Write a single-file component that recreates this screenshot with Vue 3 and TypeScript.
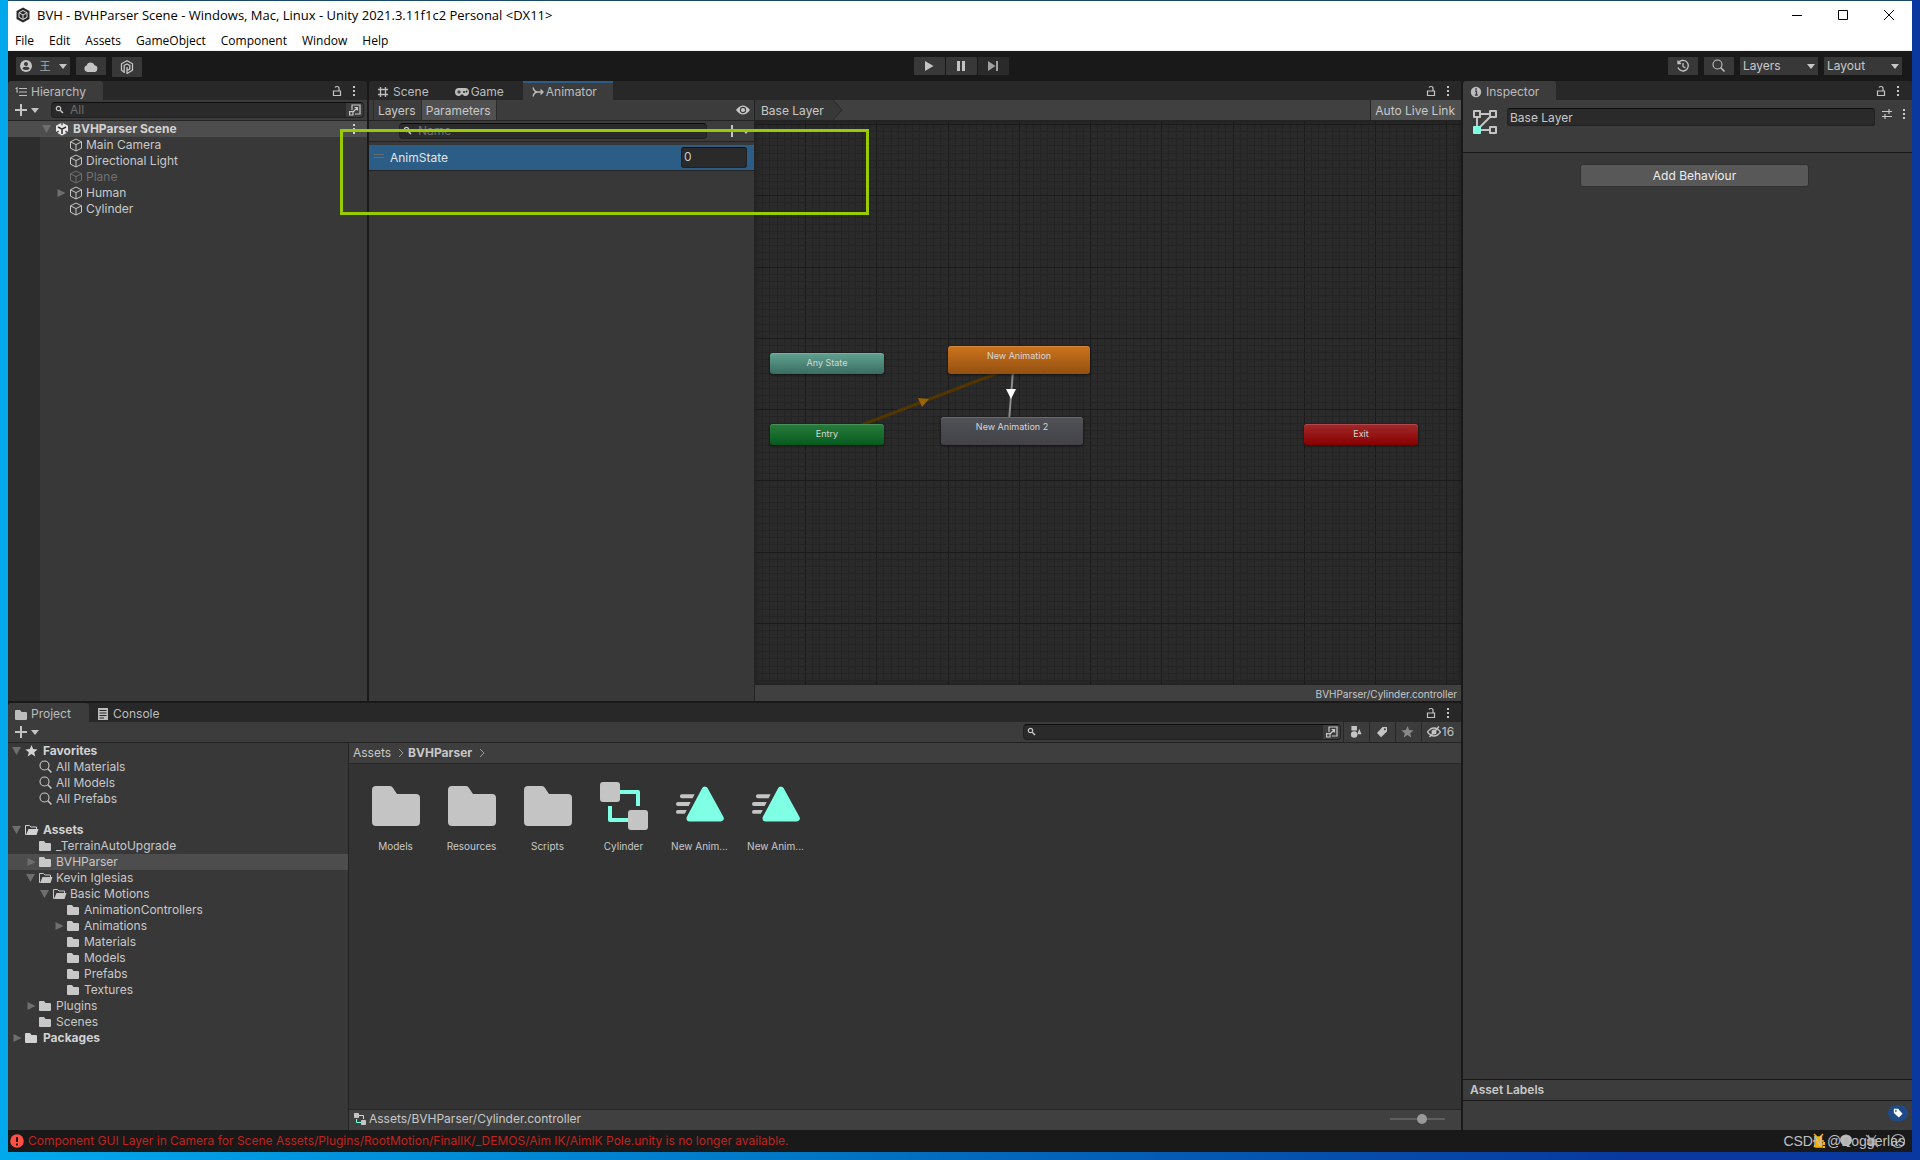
<script setup lang="ts">
import { ref } from 'vue'

interface Row {
  label: string
  depth: number
  icon: string
  caret?: 'open' | 'closed'
  bold?: boolean
  selected?: boolean
  dim?: boolean
  spaced?: boolean
}

const menus = ['File', 'Edit', 'Assets', 'GameObject', 'Component', 'Window', 'Help']

const hierarchy: Row[] = [
  { label: 'BVHParser Scene', depth: 0, icon: 'unity', caret: 'open', bold: true, selected: true },
  { label: 'Main Camera', depth: 1, icon: 'cube' },
  { label: 'Directional Light', depth: 1, icon: 'cube' },
  { label: 'Plane', depth: 1, icon: 'cube', dim: true },
  { label: 'Human', depth: 1, icon: 'cube', caret: 'closed' },
  { label: 'Cylinder', depth: 1, icon: 'cube' },
]

const project: Row[] = [
  { label: 'Favorites', depth: 0, icon: 'star', caret: 'open', bold: true },
  { label: 'All Materials', depth: 1, icon: 'search' },
  { label: 'All Models', depth: 1, icon: 'search' },
  { label: 'All Prefabs', depth: 1, icon: 'search' },
  { label: 'Assets', depth: 0, icon: 'folder-open', caret: 'open', bold: true, spaced: true },
  { label: '_TerrainAutoUpgrade', depth: 1, icon: 'folder' },
  { label: 'BVHParser', depth: 1, icon: 'folder', caret: 'closed', selected: true },
  { label: 'Kevin Iglesias', depth: 1, icon: 'folder-open', caret: 'open' },
  { label: 'Basic Motions', depth: 2, icon: 'folder-open', caret: 'open' },
  { label: 'AnimationControllers', depth: 3, icon: 'folder' },
  { label: 'Animations', depth: 3, icon: 'folder', caret: 'closed' },
  { label: 'Materials', depth: 3, icon: 'folder' },
  { label: 'Models', depth: 3, icon: 'folder' },
  { label: 'Prefabs', depth: 3, icon: 'folder' },
  { label: 'Textures', depth: 3, icon: 'folder' },
  { label: 'Plugins', depth: 1, icon: 'folder', caret: 'closed' },
  { label: 'Scenes', depth: 1, icon: 'folder' },
  { label: 'Packages', depth: 0, icon: 'folder', caret: 'closed', bold: true },
]

const assets = [
  { label: 'Models', icon: 'big-folder' },
  { label: 'Resources', icon: 'big-folder' },
  { label: 'Scripts', icon: 'big-folder' },
  { label: 'Cylinder', icon: 'big-controller' },
  { label: 'New Anim...', icon: 'big-anim' },
  { label: 'New Anim...', icon: 'big-anim' },
]

const nodes = [
  { label: 'Any State', kind: 'any', x: 15, y: 232, w: 114, h: 21 },
  { label: 'Entry', kind: 'entry', x: 15, y: 303, w: 114, h: 21 },
  { label: 'New Animation', kind: 'default', x: 193, y: 225, w: 142, h: 28 },
  { label: 'New Animation 2', kind: 'state', x: 186, y: 296, w: 142, h: 28 },
  { label: 'Exit', kind: 'exit', x: 549, y: 303, w: 114, h: 21 },
]

// Canvas grid: ten minor cells per major cell, snapped to whole pixels.
const gridStep = 7.125
const gridLines = (origin: number) =>
  Array.from({ length: 400 }, (_, i) => ({
    at: Math.round(origin + (i - 10) * gridStep),
    major: i % 10 === 0,
  }))
const columns = gridLines(50)
const rowsOfGrid = gridLines(3)

const paramName = ref('')
const paramValue = ref('0')
const layerName = ref('Base Layer')
const hierarchyQuery = ref('')
const projectQuery = ref('')
const zoom = ref(60)
</script>

<template>
  <svg class="defs" aria-hidden="true">
    <symbol id="unity" viewBox="0 0 14 14">
      <path d="M7 0.5 13 3.8V10.2L7 13.5 1 10.2V3.8Z" fill="#e8e8e8" />
      <path d="M7 7.2V12M7 7.2 3 5M7 7.2 11 5" stroke="#333" stroke-width="1.5" fill="none" />
      <path d="M7 0v3.2M1 10.8l2.6-1.6M13 10.8l-2.6-1.6" stroke="#444" stroke-width="1.4" fill="none" />
    </symbol>
    <symbol id="cube" viewBox="0 0 14 14">
      <path d="M7 1 12.5 3.8V10.2L7 13 1.5 10.2V3.8ZM1.5 3.8 7 6.6 12.5 3.8M7 6.6V13" fill="none" stroke="currentColor" stroke-width="1" stroke-linejoin="round" />
    </symbol>
    <symbol id="star" viewBox="0 0 14 14">
      <path d="M6.5 1 8.2 5.1 12.6 5.4 9.2 8.2 10.3 12.5 6.5 10.1 2.7 12.5 3.8 8.2 0.4 5.4 4.8 5.1Z" fill="currentColor" />
    </symbol>
    <symbol id="search" viewBox="0 0 14 14">
      <circle cx="5.5" cy="5.5" r="4.5" fill="none" stroke="currentColor" stroke-width="1.1" />
      <path d="M8.8 8.8 12.5 12.5" stroke="currentColor" stroke-width="1.5" />
    </symbol>
    <symbol id="mini-search" viewBox="0 0 10 10">
      <circle cx="3.5" cy="3.5" r="2.2" fill="none" stroke="currentColor" stroke-width="1.2" />
      <path d="M5.2 5.2 8 8" stroke="currentColor" stroke-width="1.5" />
    </symbol>
    <symbol id="folder" viewBox="0 0 14 14">
      <path d="M0 3Q0 2 1 2H5L6.500 4H11Q12 4 12 5V11Q12 12 11 12H1Q0 12 0 11Z" fill="currentColor" />
    </symbol>
    <symbol id="folder-open" viewBox="0 0 14 14">
      <path d="M1.2 11.5H0.5V2.5H4.500L6 4H11.5V6" fill="none" stroke="currentColor" stroke-width="1" />
      <path d="M3.5 6H13.5L11.5 12H1Z" fill="currentColor" />
    </symbol>
    <symbol id="caret-down" viewBox="0 0 8 5"><path d="M0 0H8L4 5Z" fill="currentColor" /></symbol>
    <symbol id="plus" viewBox="0 0 12 12"><path d="M6 0V12M0 6H12" stroke="currentColor" stroke-width="2" /></symbol>
    <symbol id="lock" viewBox="0 0 10 12">
      <path d="M1.500 6H8.500V10.500H1.500ZM7 6V3.500Q7 1.500 5 1.500 3.500 1.500 3 2.500" fill="none" stroke="currentColor" stroke-width="1.2" />
    </symbol>
    <symbol id="dots" viewBox="0 0 4 12">
      <path d="M1 1h2v2H1ZM1 5h2v2H1ZM1 9h2v2H1Z" fill="currentColor" />
    </symbol>
    <symbol id="popout" viewBox="0 0 12 12">
      <path d="M3 6V1H11V10H6" fill="none" stroke="currentColor" stroke-width="1.2" />
      <path d="M0.6 7.6H4V11H0.6ZM4.5 7.5 8.5 3.5M5.5 3.5H8.5V6.5" fill="none" stroke="currentColor" stroke-width="1.2" />
    </symbol>
    <symbol id="list" viewBox="0 0 12 12">
      <path d="M0.500 2.500H2.500M4 2.500H12M4 6H12M4 9.500H12M2 1V6.500M2 6H3" stroke="currentColor" stroke-width="1.100" fill="none" />
    </symbol>
    <symbol id="hash" viewBox="0 0 12 12">
      <path d="M3.500 1V11M8.500 1V11M1 3.500H11M1 8.500H11" stroke="currentColor" stroke-width="1.3" />
    </symbol>
    <symbol id="gamepad" viewBox="0 0 14 10">
      <path d="M4 1H10A4 4 0 0 1 10 9Q8.500 9 8 7.500H6Q5.500 9 4 9A4 4 0 0 1 4 1Z" fill="currentColor" />
      <path d="M2.2 5H5.8M4 3.2V6.8" stroke="#282828" stroke-width="1.1" />
      <circle cx="9" cy="5" r="1" fill="#282828" /><circle cx="11.5" cy="4.5" r="1" fill="#282828" />
    </symbol>
    <symbol id="animator" viewBox="0 0 12 12">
      <path d="M1 1.500Q2 5.500 5 6Q2 6.500 1 10.500M4 6H11M8.500 3.500 11 6 8.500 8.500" fill="none" stroke="currentColor" stroke-width="1.3" />
    </symbol>
    <symbol id="info" viewBox="0 0 12 12">
      <circle cx="6" cy="6" r="5.2" fill="currentColor" />
      <path d="M5 5.200H6.500V9M4.800 9H7.800M5.200 3H6.800" stroke="#3c3c3c" stroke-width="1.3" fill="none" />
    </symbol>
    <symbol id="console" viewBox="0 0 12 12">
      <path d="M1 0H11V12H1Z" fill="currentColor" />
      <path d="M2.500 2.500H9.500M2.500 5H9.500M2.500 7.500H9.500M2.500 10H7" stroke="#282828" stroke-width="1" />
    </symbol>
    <symbol id="eye" viewBox="0 0 14 10">
      <path d="M0 5Q3.500 0.500 7 0.500T14 5Q10.500 9.500 7 9.500T0 5Z" fill="currentColor" />
      <circle cx="7" cy="5" r="2.6" fill="none" stroke="#3c3c3c" stroke-width="1.1" />
    </symbol>
    <symbol id="eye-off" viewBox="0 0 14 12">
      <path d="M0.500 6Q3.500 2 7 2T13.500 6Q10.500 10 7 10T0.500 6Z" fill="none" stroke="currentColor" stroke-width="1.3" />
      <circle cx="7" cy="6" r="2.5" fill="currentColor" />
      <path d="M2.500 11 12 0.500" stroke="currentColor" stroke-width="1.4" />
    </symbol>
    <symbol id="shapes" viewBox="0 0 12 13">
      <path d="M1 0H7V5H1ZM7.500 9 9.500 3 12 9Z" fill="currentColor" /><circle cx="4" cy="9.3" r="3.5" fill="currentColor" />
    </symbol>
    <symbol id="tag" viewBox="0 0 12 12">
      <path d="M6.500 1H11V5.500L5 11.200 1 7Z" fill="currentColor" /><circle cx="8.8" cy="3.2" r="1" fill="#3c3c3c" />
    </symbol>
    <symbol id="big-folder" viewBox="0 0 48 48">
      <path d="M0 8Q0 4 4 4H18Q20 4 21 6L25 12H44Q48 12 48 16V40Q48 44 44 44H4Q0 44 0 40Z" fill="#c4c4c4" />
    </symbol>
    <symbol id="big-controller" viewBox="0 0 48 48">
      <path d="M20 10H38V24M10 24V38H28" fill="none" stroke="#7fffe4" stroke-width="4" stroke-linejoin="round" />
      <rect width="20" height="20" rx="3" fill="#c4c4c4" /><rect x="28" y="28" width="20" height="20" rx="3" fill="#c4c4c4" />
    </symbol>
    <symbol id="big-anim" viewBox="0 0 49 48">
      <path d="M29.500 7.500 45.500 36.500H14Z" fill="#7fffe4" stroke="#7fffe4" stroke-width="6.5" stroke-linejoin="round" />
      <path d="M6 12H19L17 16H6Q4 16 4 14T6 12ZM2 20H15L13 24H2Q0 24 0 22T2 20ZM2 28H11L9 32H2Q0 32 0 30T2 28Z" fill="#c4c4c4" />
    </symbol>
  </svg>

  <div class="desktop">
    <div class="window">
      <header class="title-bar">
        <svg class="app-icon" viewBox="0 0 14 16">
          <path d="M7 0.500 13.500 4V12L7 15.500 0.500 12V4Z" fill="#2b2b2b" />
          <path d="M7 3.500 11 5.700V10.300L7 12.500 3 10.300V5.700ZM7 8V12M7 8 3.500 6M7 8 10.500 6" fill="none" stroke="#ddd" stroke-width="1" />
        </svg>
        <h1>BVH - BVHParser Scene - Windows, Mac, Linux - Unity 2021.3.11f1c2 Personal &lt;DX11&gt;</h1>
        <div class="window-buttons">
          <button aria-label="Minimize"><svg viewBox="0 0 10 10"><path d="M0 5.500H10" /></svg></button>
          <button aria-label="Maximize"><svg viewBox="0 0 10 10"><path d="M0.500 0.500H9.500V9.500H0.500Z" /></svg></button>
          <button aria-label="Close"><svg viewBox="0 0 10 10"><path d="M0 0 10 10M10 0 0 10" /></svg></button>
        </div>
      </header>
      <nav class="menu-bar">
        <button v-for="m in menus" :key="m">{{ m }}</button>
      </nav>

      <div class="toolbar">
        <div class="tool-side">
          <button class="tool account">
            <svg class="i12" viewBox="0 0 12 12">
              <circle cx="6" cy="6" r="6" fill="currentColor" /><circle cx="6" cy="4" r="2" fill="#383838" /><path d="M2.500 9Q2.500 6.800 6 6.800T9.500 9Q6 11 2.500 9Z" fill="#383838" />
            </svg>
            <span>王</span>
            <svg class="caret"><use href="#caret-down" /></svg>
          </button>
          <button class="tool w30" aria-label="Cloud">
            <svg class="cloud" viewBox="0 0 14 11"><path d="M3.500 11A3.300 3.300 0 0 1 2.600 4.600 4.200 4.200 0 0 1 10.600 4.300 3.400 3.400 0 0 1 10.500 11Z" fill="currentColor" /></svg>
          </button>
          <button class="tool w30 plastic" aria-label="Version control">
            <svg class="i14" viewBox="0 0 14 14"><path d="M4 12 1.500 10.200V3.800L7 0.800 12.500 3.800V10.200L7 13.500V10.500L9.800 9V5.500L7 4 4.200 5.500V13M7 10V7" fill="none" stroke="currentColor" stroke-width="1.3" /></svg>
          </button>
        </div>
        <div class="play">
          <button class="tool" aria-label="Play"><svg class="i12" viewBox="0 0 12 12"><path d="M2 1 10.500 6 2 11Z" fill="currentColor" /></svg></button>
          <button class="tool" aria-label="Pause"><svg class="i12" viewBox="0 0 12 12"><path d="M2 1H5V11H2ZM7 1H10V11H7Z" fill="currentColor" /></svg></button>
          <button class="tool step" aria-label="Step"><svg class="i12" viewBox="0 0 12 12"><path d="M1 1 8.500 6 1 11ZM9 1H11V11H9Z" fill="currentColor" /></svg></button>
        </div>
        <div class="tool-side right">
          <button class="tool w30" aria-label="History">
            <svg class="i14" viewBox="0 0 14 14"><path d="M2.500 3.800A5.300 5.300 0 1 1 2 8.500M2 1.500V4.500H5M7 4V7.500L9.500 9" fill="none" stroke="currentColor" stroke-width="1.3" /></svg>
          </button>
          <button class="tool w30" aria-label="Search"><svg class="i14"><use href="#search" /></svg></button>
          <label class="picker"><select aria-label="Layers"><option>Layers</option></select><svg class="caret"><use href="#caret-down" /></svg></label>
          <label class="picker"><select aria-label="Layout"><option>Layout</option></select><svg class="caret"><use href="#caret-down" /></svg></label>
        </div>
      </div>

      <main class="docks">
        <div class="left">
          <div class="upper">
            <section class="panel hierarchy">
              <div class="tabs">
                <button class="tab on t-hierarchy"><svg class="i12"><use href="#list" /></svg>Hierarchy</button>
                <span class="tab-tools"><svg class="lock"><use href="#lock" /></svg><svg class="dots"><use href="#dots" /></svg></span>
              </div>
              <div class="bar search-bar">
                <button class="add" aria-label="Create"><svg class="i12"><use href="#plus" /></svg><svg class="caret"><use href="#caret-down" /></svg></button>
                <div class="field">
                  <svg class="i10"><use href="#mini-search" /></svg>
                  <input v-model="hierarchyQuery" placeholder="All" aria-label="Search hierarchy" />
                  <button class="pop" aria-label="Open search"><svg class="i12"><use href="#popout" /></svg></button>
                </div>
              </div>
              <ul class="tree scene-tree">
                <li v-for="r in hierarchy" :key="r.label" :class="{ bold: r.bold, selected: r.selected, dim: r.dim }">
                  <span class="indent" :style="{ width: r.depth * 14 + 'px' }"></span>
                  <span class="arrow" :class="r.caret"></span>
                  <svg class="i14"><use :href="'#' + r.icon" /></svg>
                  <span class="label">{{ r.label }}</span>
                  <svg v-if="r.bold" class="dots"><use href="#dots" /></svg>
                </li>
              </ul>
            </section>

            <section class="panel animator">
              <div class="tabs">
                <button class="tab t-scene"><svg class="i12"><use href="#hash" /></svg>Scene</button>
                <button class="tab t-game"><svg class="eye"><use href="#gamepad" /></svg>Game</button>
                <button class="tab on focus"><svg class="i12"><use href="#animator" /></svg>Animator</button>
                <span class="tab-tools"><svg class="lock"><use href="#lock" /></svg><svg class="dots"><use href="#dots" /></svg></span>
              </div>
              <div class="anim-body">
                <div class="params">
                  <div class="bar param-tabs">
                    <button>Layers</button>
                    <button class="on">Parameters</button>
                    <svg class="eye"><use href="#eye" /></svg>
                  </div>
                  <div class="bar param-search">
                    <div class="field">
                      <svg class="i10"><use href="#mini-search" /></svg>
                      <input v-model="paramName" placeholder="Name" aria-label="Search parameters" />
                    </div>
                    <button class="add" aria-label="Add parameter"><svg class="i12"><use href="#plus" /></svg><svg class="caret"><use href="#caret-down" /></svg></button>
                  </div>
                  <div class="param">
                    <span class="grip"></span>
                    <label for="anim-state">AnimState</label>
                    <input id="anim-state" v-model="paramValue" />
                  </div>
                </div>
                <div class="graph">
                  <div class="bar crumbs-bar">
                    <button class="crumb">Base Layer</button>
                    <svg class="chev" viewBox="0 0 11 20"><path d="M0 0H1L10 10 1 20H0Z" fill="#383838" /><path d="M1 0 10 10 1 20" fill="none" stroke="#282828" /></svg>
                    <button class="live">Auto Live Link</button>
                  </div>
                  <div class="canvas">
                    <svg class="grid" aria-hidden="true">
                      <g shape-rendering="crispEdges">
                        <rect v-for="(l, i) in columns" :key="'c' + i" :x="l.at" y="0" width="1" height="100%" :fill="l.major ? '#1b1b1b' : '#242424'" />
                        <rect v-for="(l, i) in rowsOfGrid" :key="'r' + i" x="0" :y="l.at" width="100%" height="1" :fill="l.major ? '#1b1b1b' : '#242424'" />
                      </g>
                      <path d="M83 313 264 244" stroke="#523600" stroke-width="3" />
                      <path d="M163 277 174 278 167 286Z" fill="#996300" />
                      <path d="M258 250 254 300" stroke="#8c8c8c" stroke-width="2" />
                      <path d="M251 268H261L256 278Z" fill="#fff" />
                    </svg>
                    <div v-for="n in nodes" :key="n.label" class="node" :class="n.kind" :style="{ left: n.x + 'px', top: n.y + 'px', width: n.w + 'px', height: n.h + 'px' }">{{ n.label }}</div>
                  </div>
                  <div class="graph-foot">BVHParser/Cylinder.controller</div>
                </div>
              </div>
            </section>
          </div>

          <section class="panel project">
            <div class="tabs">
              <button class="tab on t-project"><svg class="i12" viewBox="0 0 12 12"><use href="#folder" width="14" height="14" /></svg>Project</button>
              <button class="tab"><svg class="i12"><use href="#console" /></svg>Console</button>
              <span class="tab-tools"><svg class="lock"><use href="#lock" /></svg><svg class="dots"><use href="#dots" /></svg></span>
            </div>
            <div class="bar project-bar">
              <button class="add" aria-label="Create"><svg class="i12"><use href="#plus" /></svg><svg class="caret"><use href="#caret-down" /></svg></button>
              <div class="field">
                <svg class="i10"><use href="#mini-search" /></svg>
                <input v-model="projectQuery" aria-label="Search project" />
                <button class="pop" aria-label="Open search"><svg class="i12"><use href="#popout" /></svg></button>
              </div>
              <div class="filters">
                <button aria-label="Filter by type"><svg class="i12"><use href="#shapes" /></svg></button>
                <button aria-label="Filter by label"><svg class="i12"><use href="#tag" /></svg></button>
                <button class="fav" aria-label="Save search"><svg class="i14"><use href="#star" /></svg></button>
                <button class="hidden-count"><svg class="eye"><use href="#eye-off" /></svg>16</button>
              </div>
            </div>
            <div class="project-body">
              <ul class="tree project-tree">
                <li v-for="(r, i) in project" :key="i" :class="{ bold: r.bold, selected: r.selected, spaced: r.spaced }">
                  <span class="indent" :style="{ width: r.depth * 14 + 'px' }"></span>
                  <span class="arrow" :class="r.caret"></span>
                  <svg class="i14"><use :href="'#' + r.icon" /></svg>
                  <span class="label">{{ r.label }}</span>
                </li>
              </ul>
              <div class="browser">
                <nav class="path">
                  <a href="#">Assets</a>
                  <svg viewBox="0 0 6 10"><path d="M1 1 5 5 1 9" /></svg>
                  <a href="#" class="bold">BVHParser</a>
                  <svg viewBox="0 0 6 10"><path d="M1 1 5 5 1 9" /></svg>
                </nav>
                <div class="assets">
                  <figure v-for="(a, i) in assets" :key="i">
                    <svg><use :href="'#' + a.icon" /></svg>
                    <figcaption>{{ a.label }}</figcaption>
                  </figure>
                </div>
                <div class="browser-foot">
                  <svg class="i12"><use href="#big-controller" /></svg>
                  <span>Assets/BVHParser/Cylinder.controller</span>
                  <input v-model="zoom" type="range" aria-label="Icon size" />
                </div>
              </div>
            </div>
          </section>
        </div>

        <section class="panel inspector">
          <div class="tabs">
            <button class="tab on t-inspector"><svg class="i12"><use href="#info" /></svg>Inspector</button>
            <span class="tab-tools"><svg class="lock"><use href="#lock" /></svg><svg class="dots"><use href="#dots" /></svg></span>
          </div>
          <div class="inspector-head">
            <svg class="layer-icon" viewBox="0 0 24 24">
              <path d="M4 4H20M4 4V20H20M4 20 20 4" fill="none" stroke="#c4c4c4" stroke-width="2" />
              <path d="M1 1H7V7H1ZM17 1H23V7H17ZM17 17H23V23H17Z" fill="#3c3c3c" stroke="#c4c4c4" stroke-width="2" stroke-linejoin="round" />
              <rect y="16" width="8" height="8" rx="1" fill="#7fffe4" />
            </svg>
            <input v-model="layerName" aria-label="Layer name" />
            <svg class="i12 preset" viewBox="0 0 12 12"><path d="M1 3.500H11M1 8.500H11M8 1V6M4 6V11" fill="none" stroke="currentColor" stroke-width="1.2" /></svg>
            <svg class="dots"><use href="#dots" /></svg>
          </div>
          <div class="inspector-body"><button>Add Behaviour</button></div>
          <h2>Asset Labels</h2>
          <div class="labels">
            <button aria-label="Add label"><svg viewBox="0 0 12 12"><path d="M1 1H6L11.500 7 7 11.500 1 6Z" fill="#fff" /><circle cx="3.5" cy="3.5" r="1" fill="#204a87" /></svg></button>
          </div>
        </section>
      </main>

      <footer class="status">
        <svg class="i14" viewBox="0 0 14 14"><circle cx="7" cy="7" r="6.8" fill="#ff5046" /><path d="M7 3V8M7 9.500V11.500" stroke="#191919" stroke-width="2" /></svg>
        <span>Component GUI Layer in Camera for Scene Assets/Plugins/RootMotion/FinalIK/_DEMOS/Aim IK/AimIK Pole.unity is no longer available.</span>
        <div class="status-icons">
          <svg viewBox="0 0 16 16"><path d="M4 4H9L10 14H4ZM2 1 5 4M11 1 8 4M1 8H12M2 14 5 10M10 10V12" fill="#f7b500" stroke="#f7b500" stroke-width="1.5" /><path d="M12 9V12M12 13V15" stroke="#f7b500" stroke-width="2" /></svg>
          <svg viewBox="0 0 16 16"><ellipse cx="8" cy="7" rx="6" ry="5.5" fill="#b4b4b4" /><path d="M8 10 13 14H9Z" fill="#b4b4b4" /></svg>
          <svg viewBox="0 0 16 16"><ellipse cx="8" cy="9" rx="3.5" ry="4.5" fill="#8a8a8a" /><path d="M2 2 14 14M3 7H13M3 11H13M4 2 6 5M12 2 10 5" fill="none" stroke="#9a9a9a" stroke-width="1.3" /></svg>
          <svg viewBox="0 0 16 16"><circle cx="8" cy="8" r="6.5" fill="none" stroke="#b4b4b4" stroke-width="1.2" /><path d="M5 8 7 10 11 6" fill="none" stroke="#b4b4b4" stroke-width="1.2" /></svg>
          <span class="watermark">CSDN @Doggerlas</span>
        </div>
      </footer>
      <div class="highlight"></div>
    </div>
  </div>
</template>

<style>
html,
body {
  margin: 0;
  background: #00a4ea;
}
</style>

<style scoped>
* {
  box-sizing: border-box;
}
.defs {
  position: absolute;
  width: 0;
  height: 0;
}
button,
input,
select {
  font: inherit;
  color: inherit;
  border: 0;
  padding: 0;
  margin: 0;
  background: none;
  outline: 0;
}
svg {
  flex: none;
  display: block;
}
.desktop {
  height: 100vh;
  min-height: 720px;
  padding: 0 8px 8px;
  background: linear-gradient(90deg, #00a8ec 0%, #0078c8 40%, #0838a0 85%, #0838a0 100%);
  font: 12px/16px Inter, "Noto Sans CJK SC", sans-serif;
  color: #c8c8c8;
}
.window {
  position: relative;
  height: 100%;
  display: flex;
  flex-direction: column;
  background: #191919;
  border-top: 1px solid #1a4a70;
}
.title-bar {
  display: flex;
  align-items: center;
  height: 28px;
  padding-left: 8px;
  background: #fff;
  color: #000;
  font-family: "Open Sans", sans-serif;
}
.app-icon {
  width: 14px;
  height: 16px;
}
h1 {
  flex: 1;
  margin: 0 0 0 7px;
  font-size: 13px;
  font-weight: 400;
  white-space: nowrap;
}
.window-buttons {
  display: flex;
}
.window-buttons button {
  width: 46px;
  height: 28px;
  display: grid;
  place-items: center;
}
.window-buttons svg {
  width: 10px;
  height: 10px;
  stroke: #000;
  fill: none;
}
.menu-bar {
  display: flex;
  gap: 15px;
  height: 22px;
  padding: 2px 0 0 7px;
  background: #fff;
  border-bottom: 1px solid #f0f0f0;
  color: #000;
  font-family: "Open Sans", sans-serif;
}
.toolbar {
  display: grid;
  grid-template-columns: 1fr auto 1fr;
  align-items: start;
  height: 30px;
  padding: 6px 10px 0 8px;
}
.tool-side {
  display: flex;
  gap: 6px;
}
.right {
  justify-content: flex-end;
}
.tool {
  display: flex;
  align-items: center;
  justify-content: center;
  height: 18px;
  background: #383838;
  border-radius: 1px;
  color: #c4c4c4;
}
.account {
  width: 54px;
  gap: 8px;
}
.account span {
  font-size: 11px;
  color: #a8a8a8;
}
.w30 {
  width: 30px;
}
.plastic {
  height: 20px;
}
.cloud {
  width: 14px;
  height: 11px;
}
.play {
  display: flex;
  gap: 1px;
  margin-left: 4px;
}
.play .tool {
  width: 31px;
}
.play .step {
  background: #2a2a2a;
  color: #a0a0a0;
}
.picker {
  display: flex;
  align-items: center;
  width: 78px;
  height: 18px;
  padding: 0 3px;
  background: #383838;
}
.picker select {
  flex: 1;
  min-width: 0;
  appearance: none;
}
.i10 {
  width: 10px;
  height: 10px;
}
.i12 {
  width: 12px;
  height: 12px;
}
.i14 {
  width: 14px;
  height: 14px;
}
.caret {
  width: 8px;
  height: 5px;
}
.eye {
  width: 14px;
  height: 12px;
}
.lock {
  width: 10px;
  height: 12px;
}
.dots {
  width: 4px;
  height: 12px;
}
.docks {
  flex: 1;
  min-height: 0;
  display: flex;
  gap: 2px;
}
.left {
  flex: 1;
  min-width: 0;
  display: flex;
  flex-direction: column;
  gap: 2px;
}
.upper {
  flex: 620 1 0;
  min-height: 0;
  display: flex;
  gap: 2px;
}
.panel {
  display: flex;
  flex-direction: column;
  min-width: 0;
  min-height: 0;
  background: #383838;
  border-radius: 3px 3px 0 0;
  overflow: hidden;
}
.hierarchy {
  width: 359px;
}
.animator {
  flex: 1;
}
.project {
  flex: 427 1 0;
}
.inspector {
  width: 449px;
}
.tabs {
  display: flex;
  flex: none;
  height: 19px;
  background: #282828;
}
.tab {
  display: flex;
  align-items: center;
  gap: 4px;
  padding: 2px 20px 0 8px;
  color: #bdbdbd;
}
.tab.on {
  padding-left: 7px;
  background: #3c3c3c;
  border-radius: 3px 3px 0 0;
}
.tab.focus {
  width: 90px;
  gap: 2px;
  padding: 0 0 0 9px;
  border-top: 2px solid #2c5d87;
  border-radius: 0;
}
.t-scene {
  padding-right: 18px;
}
.t-game {
  gap: 2px;
  padding-right: 19px;
}
.t-hierarchy {
  width: 95px;
}
.t-project {
  width: 81px;
}
.t-inspector {
  width: 93px;
}
.tab-tools {
  display: flex;
  align-items: center;
  gap: 10px;
  margin-left: auto;
  padding-right: 11px;
  color: #c4c4c4;
}
.inspector .tab-tools {
  padding-right: 12px;
}
.bar {
  display: flex;
  align-items: center;
  flex: none;
  height: 21px;
  background: #3c3c3c;
  border-bottom: 1px solid #232323;
}
.add {
  display: flex;
  align-items: center;
  gap: 4px;
  color: #c4c4c4;
}
.search-bar {
  padding: 0 3px 0 7px;
  gap: 12px;
}
.field {
  flex: 1;
  display: flex;
  align-items: center;
  height: 16px;
  padding-left: 3px;
  gap: 5px;
  background: #2a2a2a;
  border: 1px solid #212121;
  border-top-color: #0d0d0d;
  border-radius: 4px;
  overflow: hidden;
}
.field input {
  flex: 1;
  min-width: 0;
  height: 14px;
}
::placeholder {
  color: #6e6e6e;
  opacity: 1;
}
.pop {
  display: grid;
  place-items: center;
  width: 17px;
  height: 16px;
  background: #3c3c3c;
}
.tree {
  list-style: none;
  margin: 0;
  padding: 0;
}
.tree li {
  display: flex;
  align-items: center;
  height: 16px;
  padding-left: 4px;
  white-space: nowrap;
}
.tree .label {
  flex: 1;
  margin-left: 3px;
}
.tree .bold {
  font-weight: 700;
  color: #d2d2d2;
}
.tree .bold .label {
  margin-left: 4px;
}
.tree .dim {
  color: #707070;
}
.tree .selected {
  background: #4d4d4d;
}
.tree .spaced {
  margin-top: 15px;
}
.tree .dots {
  margin-right: 11px;
}
.indent {
  flex: none;
}
.arrow {
  flex: none;
  width: 10px;
  height: 8px;
  margin-right: 3px;
}
.arrow.open {
  background: #6e6e6e;
  clip-path: polygon(0 0, 90% 0, 45% 100%);
}
.arrow.closed {
  background: #6e6e6e;
  clip-path: polygon(15% 0, 95% 50%, 15% 100%);
}
.scene-tree {
  flex: 1;
  background: linear-gradient(90deg, #2d2d2d 32px, #383838 32px);
}
.scene-tree li {
  padding-left: 34px;
}
.anim-body {
  flex: 1;
  min-height: 0;
  display: flex;
}
.params {
  width: 386px;
  border-right: 1px solid #232323;
}
.param-tabs {
  padding: 0 4px;
}
.param-tabs button {
  height: 20px;
  padding: 1px 5px 0 4px;
  border-left: 1px solid #2b2b2b;
}
.param-tabs .on {
  background: #505050;
  border-right: 1px solid #2b2b2b;
}
.param-tabs .eye {
  margin-left: auto;
}
.param-search {
  padding: 0 4px 0 30px;
  gap: 19px;
}
.param {
  display: flex;
  align-items: center;
  height: 26px;
  margin-top: 3px;
  padding: 0 7px 0 5px;
  background: #2c5d87;
  border-bottom: 1px solid #232323;
  color: #e4e4e4;
}
.grip {
  width: 10px;
  height: 4px;
  margin: 0 6px 4px 0;
  border: solid #6a6a6a;
  border-width: 1px 0;
}
.param label {
  flex: 1;
}
.param input {
  width: 66px;
  height: 21px;
  padding: 0 2px 2px;
  background: #2a2a2a;
  border: 1px solid #212121;
  border-top-color: #0d0d0d;
  border-radius: 3px;
  color: #c8c8c8;
}
.graph {
  flex: 1;
  min-width: 0;
  display: flex;
  flex-direction: column;
}
.crumbs-bar {
  background: #404040;
}
.crumb {
  height: 20px;
  padding: 1px 8px 0 6px;
  background: #383838;
}
.chev {
  width: 11px;
  height: 20px;
}
.live {
  height: 20px;
  margin-left: auto;
  padding: 1px 6px 0 4px;
  background: #505050;
  border-left: 1px solid #232323;
}
.canvas {
  position: relative;
  flex: 1;
  min-height: 0;
  overflow: hidden;
  background: #2a2a2a;
  box-shadow: inset 0 0 6px #1c1c1c;
}
.grid {
  width: 100%;
  height: 100%;
}
.node {
  position: absolute;
  border-radius: 3px;
  font-size: 9px;
  line-height: 20px;
  text-align: center;
  color: #d6d6d6;
  box-shadow: inset 0 1px 0 rgba(255, 255, 255, 0.15), 0 1px 3px rgba(0, 0, 0, 0.6);
}
.any {
  background: linear-gradient(#61a391, #3a6c62);
}
.entry {
  background: linear-gradient(#2a7d3c, #055a1f);
}
.default {
  background: linear-gradient(#cb741e, #945010);
}
.state {
  background: linear-gradient(#505257, #434347);
}
.exit {
  background: linear-gradient(#a22a2c, #880000);
}
.graph-foot {
  height: 16px;
  padding: 1px 4px 0 0;
  background: #404040;
  text-align: right;
  font-size: 10px;
}
.project-bar {
  padding-left: 7px;
}
.project-bar .add {
  margin-right: auto;
}
.project-bar .field {
  flex: 0 0 318px;
  margin-right: 2px;
}
.filters {
  display: flex;
}
.filters button {
  display: flex;
  align-items: center;
  justify-content: center;
  width: 26px;
  height: 20px;
  padding-right: 2px;
  border-left: 1px solid #282828;
  color: #c4c4c4;
}
.filters .fav {
  color: #888;
}
.filters .hidden-count {
  width: 40px;
  gap: 1px;
}
.project-body {
  flex: 1;
  min-height: 0;
  display: flex;
}
.project-tree {
  width: 341px;
  border-right: 1px solid #232323;
}
.browser {
  flex: 1;
  min-width: 0;
  display: flex;
  flex-direction: column;
  background: #333;
}
.path {
  display: flex;
  align-items: center;
  height: 21px;
  padding-left: 4px;
  background: #3e3e3e;
  border-bottom: 1px solid #282828;
}
.path a {
  color: inherit;
  text-decoration: none;
}
.path .bold {
  font-weight: 700;
}
.path svg {
  width: 6px;
  height: 10px;
  margin: 0 4px 0 7px;
  fill: none;
  stroke: #9a9a9a;
}
.assets {
  flex: 1;
  display: flex;
  padding: 18px 0 0 9px;
}
figure {
  display: flex;
  flex-direction: column;
  align-items: center;
  width: 76px;
  margin: 0;
}
figure svg {
  width: 48px;
  height: 48px;
}
figcaption {
  margin-top: 8px;
  padding-right: 1px;
  font-size: 10px;
}
.browser-foot {
  display: flex;
  align-items: center;
  gap: 3px;
  height: 21px;
  padding: 0 16px 2px 5px;
  background: #404040;
  border-top: 1px solid #282828;
}
.browser-foot span {
  flex: 1;
}
input[type="range"] {
  appearance: none;
  width: 55px;
  height: 12px;
}
input[type="range"]::-webkit-slider-runnable-track {
  height: 2px;
  background: #5e5e5e;
}
input[type="range"]::-webkit-slider-thumb {
  appearance: none;
  width: 10px;
  height: 10px;
  margin-top: -4px;
  border-radius: 50%;
  background: #999;
}
.inspector-head {
  display: flex;
  align-items: flex-start;
  height: 53px;
  padding: 8px 6px 0 10px;
  background: #3c3c3c;
  border-bottom: 1px solid #1a1a1a;
}
.layer-icon {
  width: 24px;
  height: 24px;
  margin: 2px 10px 0 0;
}
.inspector-head input {
  flex: 1;
  min-width: 0;
  height: 18px;
  padding: 0 2px;
  background: #2a2a2a;
  border: 1px solid #212121;
  border-top-color: #0d0d0d;
  border-radius: 3px;
}
.preset {
  margin: 0 9px 0 6px;
}
.inspector-body {
  flex: 1;
  padding: 11px 0 0 14px;
  text-align: center;
}
.inspector-body button {
  width: 229px;
  height: 23px;
  background: #585858;
  border: 1px solid #303030;
  border-radius: 3px;
  color: #eee;
}
h2 {
  height: 22px;
  margin: 0;
  padding: 2px 7px 0;
  background: #3c3c3c;
  border: solid #1a1a1a;
  border-width: 1px 0;
  font-size: 12px;
  font-weight: 600;
}
.labels {
  display: flex;
  justify-content: flex-end;
  height: 29px;
  padding: 4px 4px 0;
  background: #3c3c3c;
}
.labels button {
  display: grid;
  place-items: center;
  width: 20px;
  height: 16px;
  background: #204a87;
  border-radius: 8px;
}
.labels svg {
  width: 10px;
  height: 10px;
}
.status {
  display: flex;
  align-items: center;
  gap: 4px;
  height: 22px;
  padding: 0 6px 0 2px;
  color: #c3221f;
}
.status-icons {
  position: relative;
  display: flex;
  gap: 10px;
  margin-left: auto;
}
.status-icons svg {
  width: 16px;
  height: 16px;
}
.watermark {
  position: absolute;
  right: 1px;
  top: 0;
  font: 14px/16px "Liberation Sans", Arial, sans-serif;
  color: #c0c0c0;
  white-space: nowrap;
}
.highlight {
  position: absolute;
  left: 332px;
  top: 128px;
  width: 529px;
  height: 86px;
  border: 3px solid #99cc00;
  pointer-events: none;
}
</style>
